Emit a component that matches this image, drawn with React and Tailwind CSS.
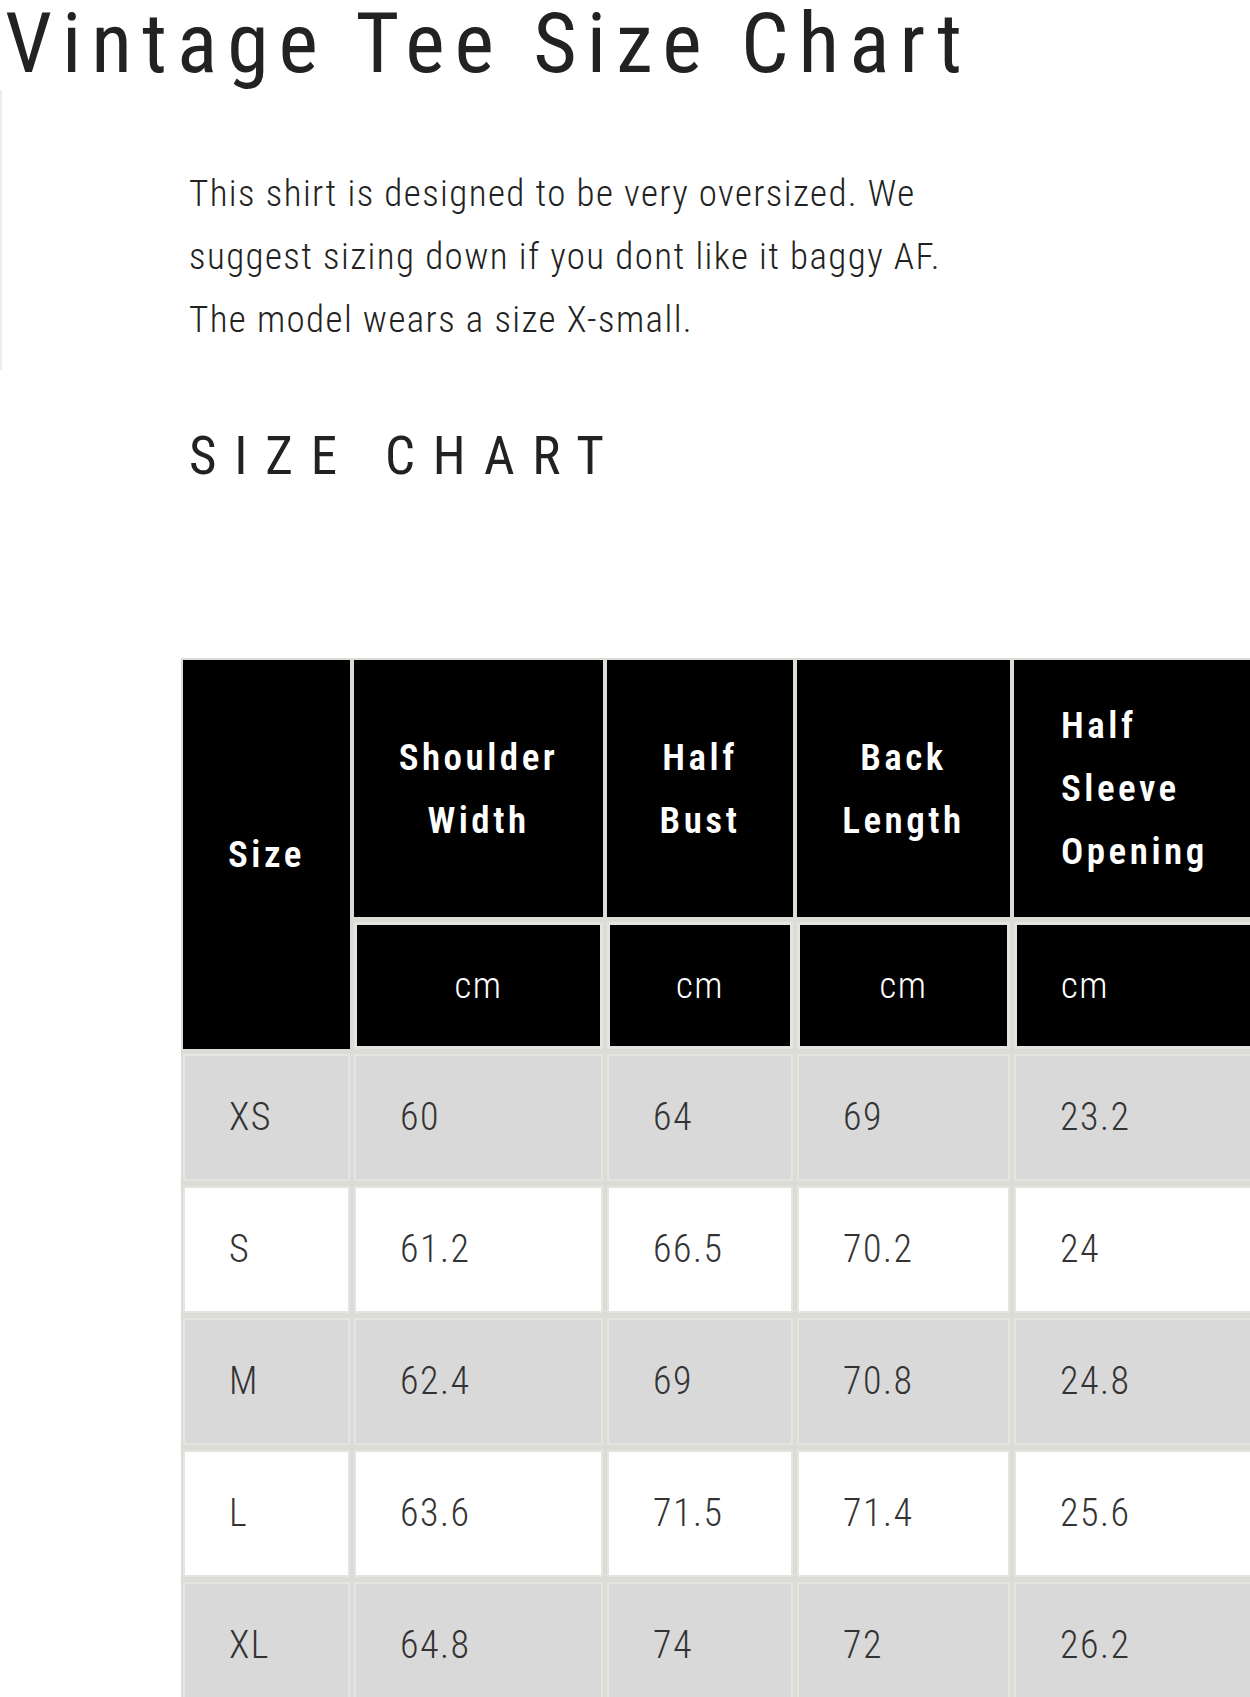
const FONT = { fontFamily: '"Roboto Condensed", Roboto, "Liberation Sans", sans-serif' }

const COLS = [
  { key: "size", head: ["Size"] },
  { key: "shoulder", head: ["Shoulder", "Width"] },
  { key: "bust", head: ["Half", "Bust"] },
  { key: "back", head: ["Back", "Length"] },
  { key: "sleeve", head: ["Half", "Sleeve", "Opening"], left: true },
]

const ROWS = [
  ["XS", "60", "64", "69", "23.2"],
  ["S", "61.2", "66.5", "70.2", "24"],
  ["M", "62.4", "69", "70.8", "24.8"],
  ["L", "63.6", "71.5", "71.4", "25.6"],
  ["XL", "64.8", "74", "72", "26.2"],
]

function HeadCell({ col, className = "" }) {
  return (
    <div
      className={`flex items-center bg-black text-[37px] font-semibold leading-[63px] tracking-[3.5px] text-white ${
        col.left ? "justify-start pl-[47px] text-left" : "justify-center text-center"
      } ${className}`}
    >
      <div>
        {col.head.map((l) => (
          <div key={l}>{l}</div>
        ))}
      </div>
    </div>
  )
}

export default function App() {
  return (
    <div className="relative h-[1697px] w-[1250px] overflow-hidden bg-white text-[#222]" style={FONT}>
      <div className="absolute left-0 top-[90px] h-[280px] w-[2px] bg-[#ececec]" />

      <h1 className="mt-[2px] whitespace-nowrap pl-[5px] text-[84px] font-normal leading-none tracking-[10px]">
        Vintage Tee Size Chart
      </h1>

      <p className="ml-[189px] mt-[76px] whitespace-nowrap text-[37px] font-light leading-[63px] tracking-[1.4px] text-[#222]">
        This shirt is designed to be very oversized. We
        <br />
        suggest sizing down if you dont like it baggy AF.
        <br />
        The model wears a size X-small.
      </p>

      <h2 className="ml-[189px] mt-[79px] whitespace-nowrap text-[53px] font-normal leading-none tracking-[17.8px]">
        SIZE CHART
      </h2>

      <div className="ml-[181px] mt-[175px] inline-grid grid-cols-[167px_249px_186px_213px_260px] grid-rows-[257px_127px_127px_127px_127px_127px_127px] gap-x-[4px] gap-y-[5px] bg-[#dcdcd6] p-[2px]">
        <HeadCell col={COLS[0]} className="row-span-2" />
        {COLS.slice(1).map((c) => (
          <HeadCell key={c.key} col={c} />
        ))}
        {COLS.slice(1).map((c) => (
          <div
            key={c.key + "-cm"}
            className={`flex items-center border-[3px] border-[#e4e4e0] bg-black text-[37px] font-light tracking-[1.5px] text-white ${
              c.left ? "justify-start pl-[44px]" : "justify-center"
            }`}
          >
            cm
          </div>
        ))}
        {ROWS.map((row, i) =>
          row.map((v, j) => (
            <div
              key={i + "-" + j}
              className={`flex items-center border-2 border-[#e4e4e0] pl-[44px] text-[38px] font-light tracking-[1.5px] text-[#333] ${
                i % 2 === 0 ? "bg-[#d9d9d9]" : "bg-white"
              }`}
            >
              {v}
            </div>
          ))
        )}
      </div>
    </div>
  )
}
